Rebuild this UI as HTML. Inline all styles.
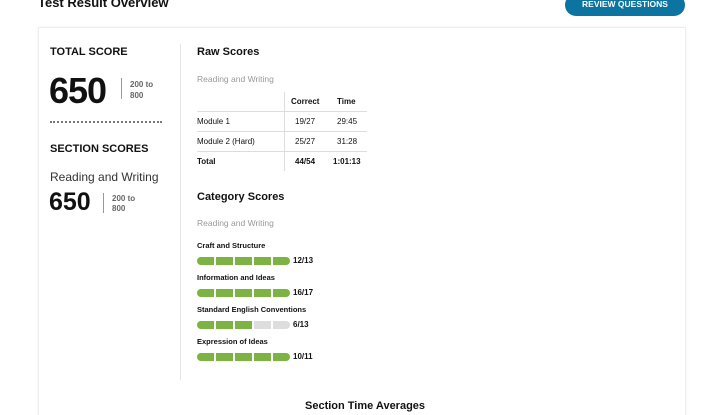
<!DOCTYPE html>
<html style="overflow:hidden"><head><style>
*{margin:0;padding:0;box-sizing:border-box}
html,body{width:720px;height:415px;overflow:hidden}
body{background:#fff;font-family:"Liberation Sans",sans-serif;color:#111;position:relative}
.a{position:absolute;white-space:nowrap}
.b{font-weight:bold}
.card{position:absolute;left:38px;top:27px;width:648px;height:395px;border:1px solid #eee;box-shadow:0 0 3px rgba(0,0,0,.06)}
.bar{position:absolute;left:197px;height:8px;display:flex;gap:2px}
.bar i{display:block;width:17px;height:8px;background:#7cb342}
.bar i.e{background:#ddd}
.bar i:first-child{border-radius:4px 0 0 4px}
.bar i:last-child{border-radius:0 4px 4px 0}
</style></head><body>
<div class="a b" style="left:38px;top:-5px;font-size:13px">Test Result Overview</div>
<div class="a b" style="left:565px;top:-6px;width:120px;height:22px;border-radius:11px;background:#0b74a0;color:#fff;font-size:8.5px;text-align:center;line-height:20px">REVIEW QUESTIONS</div>
<div class="card"></div>
<div class="a" style="left:180px;top:44px;width:1px;height:336px;background:#e3e3e3"></div>
<div class="a b" style="left:50px;top:46px;font-size:11px">TOTAL SCORE</div>
<div class="a b" style="left:49px;top:70px;font-size:36px;letter-spacing:-1px">650</div>
<div class="a" style="left:121px;top:78px;width:1px;height:21px;background:#999"></div>
<div class="a b" style="left:130px;top:79px;font-size:8px;color:#666;line-height:11px">200 to<br>800</div>
<div class="a" style="left:50px;top:121px;width:112px;border-top:2px dotted #777"></div>
<div class="a b" style="left:50px;top:143px;font-size:11px">SECTION SCORES</div>
<div class="a" style="left:50px;top:170px;font-size:12px;color:#333">Reading and Writing</div>
<div class="a b" style="left:49px;top:188px;font-size:25px">650</div>
<div class="a" style="left:103px;top:193px;width:1px;height:20px;background:#999"></div>
<div class="a b" style="left:112px;top:194px;font-size:8px;color:#666;line-height:10px">200 to<br>800</div>
<div class="a b" style="left:197px;top:46px;font-size:11px">Raw Scores</div>
<div class="a" style="left:197px;top:74px;font-size:8.5px;color:#999">Reading and Writing</div>
<div class="a" style="left:197px;top:92px;width:170px;height:79px;font-size:8px">
<div class="a" style="left:87px;top:0;width:1px;height:79px;background:#ddd"></div>
<div class="a" style="left:0;top:19px;width:170px;height:1px;background:#ddd"></div>
<div class="a" style="left:0;top:39px;width:170px;height:1px;background:#ddd"></div>
<div class="a" style="left:0;top:59px;width:170px;height:1px;background:#ddd"></div>
<div class="a b" style="left:94px;top:5px">Correct</div><div class="a b" style="left:140px;top:5px">Time</div>
<div class="a" style="left:0;top:25px">Module 1</div><div class="a" style="left:98px;top:25px">19/27</div><div class="a" style="left:140px;top:25px">29:45</div>
<div class="a" style="left:0;top:45px">Module 2 (Hard)</div><div class="a" style="left:98px;top:45px">25/27</div><div class="a" style="left:140px;top:45px">31:28</div>
<div class="a b" style="left:0;top:65px">Total</div><div class="a b" style="left:98px;top:65px">44/54</div><div class="a b" style="left:136px;top:65px">1:01:13</div>
</div>
<div class="a b" style="left:197px;top:191px;font-size:11px">Category Scores</div>
<div class="a" style="left:197px;top:218px;font-size:8.5px;color:#999">Reading and Writing</div>
<div class="a b" style="left:197px;top:241px;font-size:7.5px">Craft and Structure</div>
<div class="bar" style="top:257px"><i></i><i></i><i></i><i></i><i></i></div>
<div class="a b" style="left:293px;top:256px;font-size:8px">12/13</div>
<div class="a b" style="left:197px;top:273px;font-size:7.5px">Information and Ideas</div>
<div class="bar" style="top:289px"><i></i><i></i><i></i><i></i><i></i></div>
<div class="a b" style="left:293px;top:288px;font-size:8px">16/17</div>
<div class="a b" style="left:197px;top:305px;font-size:7.5px">Standard English Conventions</div>
<div class="bar" style="top:321px"><i></i><i></i><i></i><i class="e"></i><i class="e"></i></div>
<div class="a b" style="left:293px;top:320px;font-size:8px">6/13</div>
<div class="a b" style="left:197px;top:337px;font-size:7.5px">Expression of Ideas</div>
<div class="bar" style="top:353px"><i></i><i></i><i></i><i></i><i></i></div>
<div class="a b" style="left:293px;top:352px;font-size:8px">10/11</div>
<div class="a b" style="left:305px;top:400px;font-size:11px">Section Time Averages</div>
</body></html>
